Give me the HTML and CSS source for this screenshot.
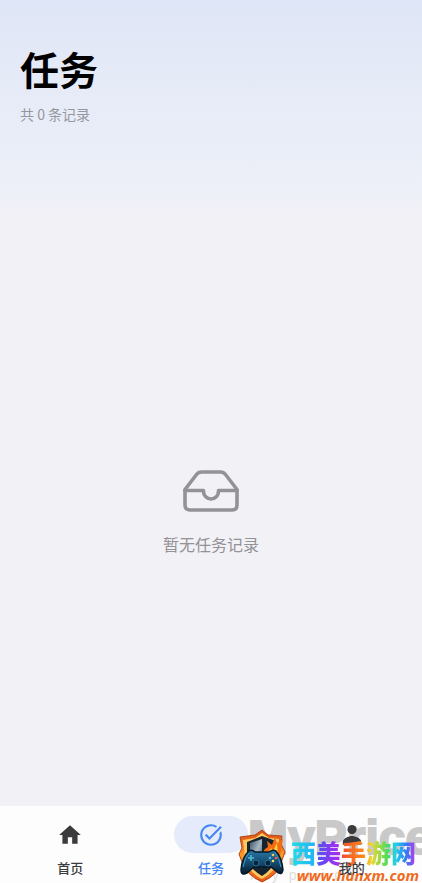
FILE: index.html
```html
<!DOCTYPE html>
<html lang="zh-CN">
<head>
<meta charset="utf-8">
<meta name="viewport" content="width=device-width, initial-scale=1">
<title>任务</title>
<link rel="stylesheet" href="styles.css">
</head>
<body>
<div class="app">
  <header class="header">
    <h1 class="title">任务</h1>
    <p class="count">共 0 条记录</p>
  </header>
  <main class="empty">
    <svg class="empty-icon" viewBox="0 0 56 42" fill="none" stroke="#929297" stroke-width="3.6" stroke-linejoin="round" stroke-linecap="round" aria-hidden="true">
      <path d="M2 19.5 13.5 4.5Q15.500 2 18.500 2H37.500Q40.500 2 42.500 4.500L54 19.500V35Q54 40 49 40H7Q2 40 2 35Z"/>
      <path d="M2 20.500H20.500V21.500a7.500 7.500 0 0 0 15 0V20.500H54"/>
    </svg>
    <p class="empty-text">暂无任务记录</p>
  </main>
  <nav class="tabs">
    <div class="brand" aria-hidden="true">MyPrice</div>
    <div class="brand-small" aria-hidden="true"><span>M</span><span>y</span><span>p</span><span>r</span><span>i</span><span>c</span><span>e</span></div>
    <a class="tab" href="#home">
      <span class="pill"><svg class="icon" viewBox="0 0 24 24" fill="currentColor" aria-hidden="true"><path d="M10 20v-6h4v6h5v-8h3L12 3 2 12h3v8z"/></svg></span>
      <span class="label">首页</span>
    </a>
    <a class="tab active" href="#tasks" aria-current="page">
      <span class="pill"><svg class="icon" viewBox="0 0 24 24" fill="currentColor" aria-hidden="true"><path d="M22 5.180 10.590 16.600l-4.240-4.240 1.410-1.410 2.830 2.830 10-10zM19.790 10.220c.13.570.21 1.170.21 1.780 0 4.420-3.580 8-8 8s-8-3.580-8-8 3.580-8 8-8c1.580 0 3.040.46 4.280 1.250l1.440-1.440A9.900 9.900 0 0 0 12 2C6.480 2 2 6.480 2 12s4.480 10 10 10 10-4.480 10-10c0-1.190-.22-2.330-.6-3.390z"/></svg></span>
      <span class="label">任务</span>
    </a>
    <a class="tab" href="#me">
      <span class="pill"><svg class="icon" viewBox="0 0 24 24" fill="currentColor" aria-hidden="true"><circle cx="12" cy="7" r="4.200"/><path d="M3.500 21v-2.500c0-3.500 5.500-5.500 8.500-5.500s8.500 2 8.500 5.500V21z"/></svg></span>
      <span class="label">我的</span>
    </a>
    <div class="stamp">
      <svg class="shield" viewBox="0 0 48 54" aria-hidden="true">
        <defs>
          <linearGradient id="fire" x2="0" y2="1"><stop stop-color="#d94a13"/><stop offset=".5" stop-color="#ff9a26"/><stop offset="1" stop-color="#e95713"/></linearGradient>
          <linearGradient id="pad" x2="0" y2="1"><stop stop-color="#2878a6"/><stop offset=".55" stop-color="#14486c"/><stop offset="1" stop-color="#071b2c"/></linearGradient>
          <linearGradient id="steel" x2="1" y2="1"><stop stop-color="#3c5468"/><stop offset=".5" stop-color="#a9b9c4"/><stop offset="1" stop-color="#1c2c3a"/></linearGradient>
        </defs>
        <path fill="url(#fire)" stroke="#b3431a" d="M24 1 30 6 44 7 43 15 47 23 44 31Q42 45 24 53 7 45 4 33L1 25 4 19 2 8 17 6Z"/>
        <path fill="#ffc861" d="M24 4 31 9 41 10 40 29Q38 43 24 50 10 43 7 29L5 11 17 9Z"/>
        <path fill="#17232f" d="M24 7 38 12V30Q34 41 24 47 13 41 9 30V13Z"/>
        <path fill="url(#steel)" d="M24 10V40L12 29V14Z"/>
        <path fill="#f36b12" d="M25 26Q25 20 30 18L29 12 34 16 37 8 39 14 45 10 42 27Z"/>
        <path fill="#ffd13f" d="M29 26 33 19 35 22 39 14 40 27Z"/>
        <path fill="url(#pad)" stroke="#061828" stroke-width="1.500" d="M11 22Q14 20 17 23H31Q35 20 38 22 44 29 45 41 44 47 39 43L33 38H16L9 44Q3 47 3 41 4 28 11 22Z"/>
        <path d="M11 24Q7 28 5 38M37 24Q41 28 43 38" fill="none" stroke="#329ecb"/>
        <path d="M10 29h6M13 26v6" stroke="#55bad4" stroke-width="1.500"/>
        <circle cx="18" cy="34" r="3" fill="#08243a" stroke="#2b7297"/>
        <circle cx="30" cy="34" r="3" fill="#08243a" stroke="#2b7297"/>
        <circle cx="35" cy="26" r="1.300" fill="#ffc44a"/><circle cx="38" cy="29" r="1.300" fill="#ff5c38"/><circle cx="35" cy="32" r="1.300" fill="#f8e16b"/><circle cx="32" cy="29" r="1.300" fill="#43b5e0"/>
      </svg>
      <div class="stamp-text">
        <span class="stamp-name">西美手游网</span>
        <span class="stamp-url">www.hanxm.com</span>
      </div>
    </div>
  </nav>
</div>
</body>
</html>
```
FILE: styles.css
```css
* { box-sizing: border-box; }
body {
  margin: 0;
  font-family: "Noto Sans CJK SC", sans-serif;
  background: #f2f1f6;
}
.app {
  min-height: 100vh;
  display: flex;
  flex-direction: column;
  background: linear-gradient(#dfe6f7 0, #e4e9f7 60px, #e9edf8 130px, #edf0f8 190px, #f2f1f6 220px);
}
.header { padding: 40px 20px 0; }
.title {
  margin: 0;
  font-size: 39px;
  line-height: 56px;
  font-weight: 700;
  color: #000;
}
.count {
  margin: 8px 0 0;
  font-size: 14px;
  line-height: 20px;
  color: #95979f;
}
.empty {
  flex: 1;
  display: flex;
  flex-direction: column;
  align-items: center;
  justify-content: center;
  gap: 20px;
  padding-top: 168px;
  padding-bottom: 72px;
}
.empty-icon { width: 56px; height: 42px; }
.empty-text {
  margin: 0;
  font-size: 16px;
  line-height: 24px;
  color: #929297;
}
.tabs {
  position: relative;
  display: grid;
  grid-template-columns: repeat(3, 1fr);
  padding: 10px 0 5px;
  background: #fdfdfd;
  overflow: hidden;
}
.tab {
  display: flex;
  flex-direction: column;
  align-items: center;
  gap: 5px;
  color: #3b3b3d;
  text-decoration: none;
}
.pill {
  display: flex;
  align-items: center;
  justify-content: center;
  width: 74px;
  height: 37px;
  border-radius: 19px;
}
.icon {
  position: relative;
  width: 26px;
  height: 26px;
}
.label {
  position: relative;
  z-index: 2;
  font-size: 13px;
  line-height: 20px;
  font-weight: 500;
}
.active { color: #4486f4; }
.active .pill { background: #e5ebfb; }
.brand {
  position: absolute;
  top: 0;
  left: 248px;
  font: 700 48px/64px "Liberation Sans", sans-serif;
  color: #c9c9c9;
  -webkit-text-stroke: 2px #c9c9c9;
}
.brand-small {
  position: absolute;
  left: 250px;
  bottom: 0;
  display: flex;
  gap: 10px;
  font: 14px/16px "Liberation Sans", sans-serif;
  color: #dedede;
}
.stamp {
  position: absolute;
  z-index: 1;
  right: 3px;
  bottom: 0;
  display: flex;
  align-items: flex-end;
  gap: 5px;
}
.shield { width: 48px; height: 54px; }
.stamp-text {
  display: flex;
  flex-direction: column;
  width: 128px;
}
.stamp-name {
  align-self: flex-start;
  font-size: 25px;
  line-height: 32px;
  font-weight: 900;
  color: transparent;
  background: linear-gradient(90deg, #1fe0e6 0%, #25b4f5 18%, #5b4df0 23%, #a62df0 38%, #f5532e 42%, #fb8b1b 58%, #f2d62d 64%, #4fdc5a 77%, #1fd0ee 84%, #2f7cf5 92%, #c036f0 100%);
  -webkit-background-clip: text;
  background-clip: text;
}
.stamp-url {
  align-self: flex-end;
  font: italic 700 15px/15px "Open Sans", sans-serif;
  color: #f06a1d;
}
```
